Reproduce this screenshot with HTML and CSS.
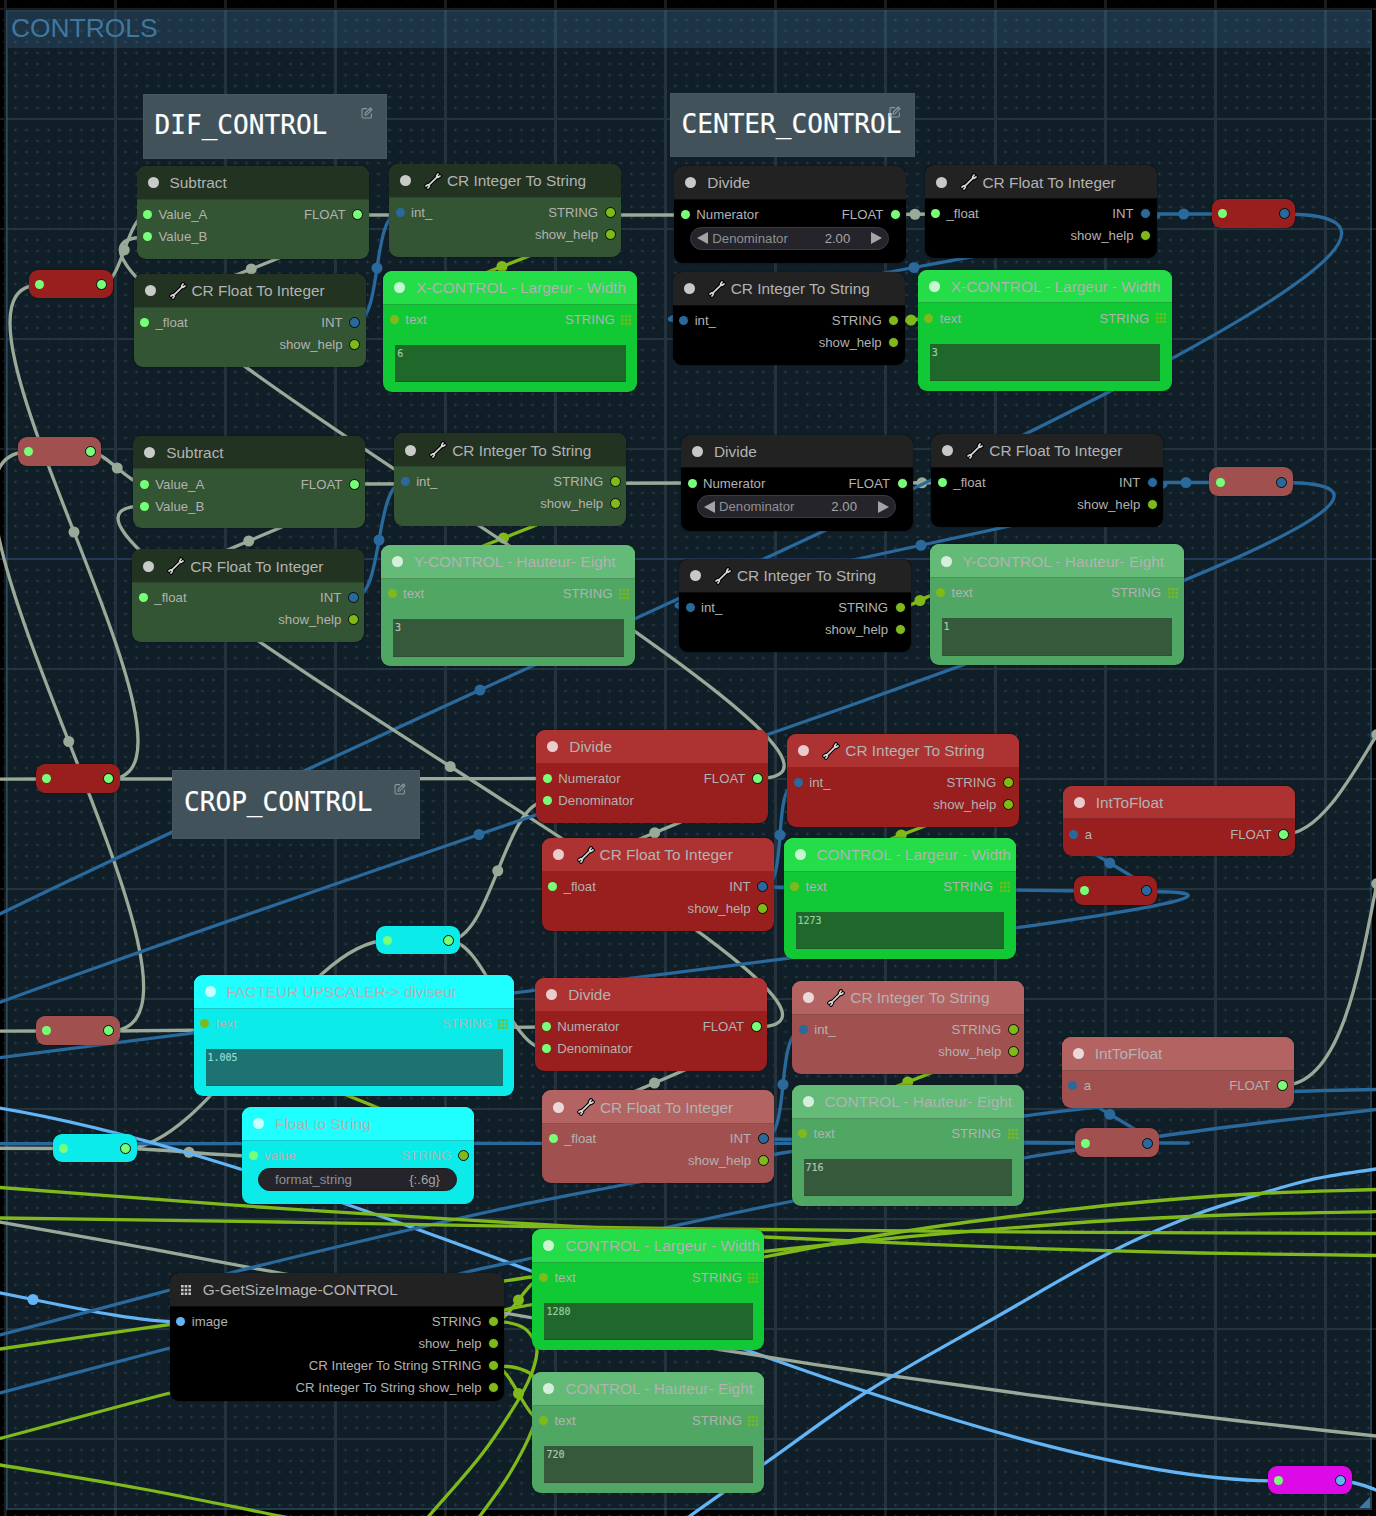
FILE: index.html
```html
<!DOCTYPE html>
<html lang="en">
<head>
<meta charset="utf-8">
<title>Controls graph</title>
<link rel="stylesheet" href="styles.css">
</head>
<body>
<svg class="defs" aria-hidden="true">
  <symbol id="wrench" viewBox="0 0 18 18">
    <path class="wrench-edge" d="M4.8 13.2 13.2 4.8M14 1.900 12.600 3.900 14 5.400 16 4M2 14 4 12.600 5.400 14 4 16"/>
    <path class="wrench-fill" d="M4.8 13.2 13.2 4.8M14 1.900 12.600 3.900 14 5.400 16 4M2 14 4 12.600 5.400 14 4 16"/>
  </symbol>
  <symbol id="grid9" viewBox="0 0 10 10">
    <path d="M0 0h2.6v2.6H0zM3.7 0h2.6v2.6H3.7zM7.4 0H10v2.6H7.4zM0 3.7h2.6v2.6H0zM3.7 3.7h2.6v2.6H3.7zM7.4 3.7H10v2.6H7.4zM0 7.4h2.6V10H0zM3.7 7.4h2.6V10H3.7zM7.4 7.4H10V10H7.4z"/>
  </symbol>
  <symbol id="edit" viewBox="0 0 12 12">
    <path d="M6 1.6H2.2Q1 1.6 1 2.8v7Q1 11 2.2 11h7q1.2 0 1.2-1.2V6.5M4 8.1 4.4 6 9.3 1 11 2.6 6 7.7zM8.2 2.2l1.6 1.6"/>
  </symbol>
</svg>
<main class="canvas">
  <svg class="layer" width="1376" height="1516">
    <defs>
      <pattern id="tickcell" x="7" y="6.5" width="11" height="11" patternUnits="userSpaceOnUse">
        <path class="tick" d="M2.500 5h4v1h-4zM4 4h1v3H4z"/>
      </pattern>
      <pattern id="tile" x="4" y="8" width="110" height="110" patternUnits="userSpaceOnUse">
        <rect width="110" height="110" fill="url(#tickcell)"/>
        <rect class="line" width="3" height="110"/>
        <rect class="line" width="110" height="2"/>
      </pattern>
    </defs>
    <rect width="1376" height="1516" fill="url(#tile)"/>
    <rect class="seam" y="558" width="1376" height="2"/>
  </svg>

  <section class="group"><h1>CONTROLS</h1><svg class="grip" viewBox="0 0 11 11"><path d="M11 0v11H0z"/></svg></section>

  <svg class="layer links" id="links" width="1376" height="1516"></svg>

  <div class="note note-dif"><h2>DIF_CONTROL</h2><svg class="edit"><use href="#edit"/></svg></div>
  <div class="note note-center"><h2>CENTER_CONTROL</h2><svg class="edit"><use href="#edit"/></svg></div>
  <div class="note note-crop"><h2>CROP_CONTROL</h2><svg class="edit"><use href="#edit"/></svg></div>

  <!-- difference -->
  <article class="node forest sub-x">
    <header><i></i><h3>Subtract</h3></header>
    <div class="slots"><ul><li class="float">Value_A</li><li class="float">Value_B</li></ul><ul class="out"><li class="float">FLOAT</li></ul></div>
  </article>
  <article class="node forest dif-int-x">
    <header><i></i><svg class="wrench"><use href="#wrench"/></svg><h3>CR Float To Integer</h3></header>
    <div class="slots"><ul><li class="float">_float</li></ul><ul class="out"><li class="int">INT</li><li class="string">show_help</li></ul></div>
  </article>
  <article class="node forest dif-str-x">
    <header><i></i><svg class="wrench"><use href="#wrench"/></svg><h3>CR Integer To String</h3></header>
    <div class="slots"><ul><li class="int">int_</li></ul><ul class="out"><li class="string">STRING</li><li class="string">show_help</li></ul></div>
  </article>
  <article class="node lime show wide dif-show-x">
    <header><i></i><h3>X-CONTROL - Largeur - Width</h3></header>
    <div class="slots"><ul><li class="string">text</li></ul><ul class="out"><li class="list">STRING<svg><use href="#grid9"/></svg></li></ul></div>
    <output>6</output>
  </article>
  <article class="node forest sub-y">
    <header><i></i><h3>Subtract</h3></header>
    <div class="slots"><ul><li class="float">Value_A</li><li class="float">Value_B</li></ul><ul class="out"><li class="float">FLOAT</li></ul></div>
  </article>
  <article class="node forest dif-int-y">
    <header><i></i><svg class="wrench"><use href="#wrench"/></svg><h3>CR Float To Integer</h3></header>
    <div class="slots"><ul><li class="float">_float</li></ul><ul class="out"><li class="int">INT</li><li class="string">show_help</li></ul></div>
  </article>
  <article class="node forest dif-str-y">
    <header><i></i><svg class="wrench"><use href="#wrench"/></svg><h3>CR Integer To String</h3></header>
    <div class="slots"><ul><li class="int">int_</li></ul><ul class="out"><li class="string">STRING</li><li class="string">show_help</li></ul></div>
  </article>
  <article class="node sage show wide dif-show-y">
    <header><i></i><h3>Y-CONTROL - Hauteur- Eight</h3></header>
    <div class="slots"><ul><li class="string">text</li></ul><ul class="out"><li class="list">STRING<svg><use href="#grid9"/></svg></li></ul></div>
    <output>3</output>
  </article>

  <!-- center -->
  <article class="node black tall div-x">
    <header><i></i><h3>Divide</h3></header>
    <div class="slots"><ul><li class="float">Numerator</li></ul><ul class="out"><li class="float">FLOAT</li></ul></div>
    <div class="widget number"><b class="prev"></b><span>Denominator</span><span class="value">2.00</span><b class="next"></b></div>
  </article>
  <article class="node black cen-int-x">
    <header><i></i><svg class="wrench"><use href="#wrench"/></svg><h3>CR Float To Integer</h3></header>
    <div class="slots"><ul><li class="float">_float</li></ul><ul class="out"><li class="int">INT</li><li class="string">show_help</li></ul></div>
  </article>
  <article class="node black cen-str-x">
    <header><i></i><svg class="wrench"><use href="#wrench"/></svg><h3>CR Integer To String</h3></header>
    <div class="slots"><ul><li class="int">int_</li></ul><ul class="out"><li class="string">STRING</li><li class="string">show_help</li></ul></div>
  </article>
  <article class="node lime show wide cen-show-x">
    <header><i></i><h3>X-CONTROL - Largeur - Width</h3></header>
    <div class="slots"><ul><li class="string">text</li></ul><ul class="out"><li class="list">STRING<svg><use href="#grid9"/></svg></li></ul></div>
    <output>3</output>
  </article>
  <article class="node black tall div-y">
    <header><i></i><h3>Divide</h3></header>
    <div class="slots"><ul><li class="float">Numerator</li></ul><ul class="out"><li class="float">FLOAT</li></ul></div>
    <div class="widget number"><b class="prev"></b><span>Denominator</span><span class="value">2.00</span><b class="next"></b></div>
  </article>
  <article class="node black cen-int-y">
    <header><i></i><svg class="wrench"><use href="#wrench"/></svg><h3>CR Float To Integer</h3></header>
    <div class="slots"><ul><li class="float">_float</li></ul><ul class="out"><li class="int">INT</li><li class="string">show_help</li></ul></div>
  </article>
  <article class="node black cen-str-y">
    <header><i></i><svg class="wrench"><use href="#wrench"/></svg><h3>CR Integer To String</h3></header>
    <div class="slots"><ul><li class="int">int_</li></ul><ul class="out"><li class="string">STRING</li><li class="string">show_help</li></ul></div>
  </article>
  <article class="node sage show wide cen-show-y">
    <header><i></i><h3>Y-CONTROL - Hauteur- Eight</h3></header>
    <div class="slots"><ul><li class="string">text</li></ul><ul class="out"><li class="list">STRING<svg><use href="#grid9"/></svg></li></ul></div>
    <output>1</output>
  </article>

  <!-- crop -->
  <article class="node red crop-div-w">
    <header><i></i><h3>Divide</h3></header>
    <div class="slots"><ul><li class="float">Numerator</li><li class="float">Denominator</li></ul><ul class="out"><li class="float">FLOAT</li></ul></div>
  </article>
  <article class="node red crop-int-w">
    <header><i></i><svg class="wrench"><use href="#wrench"/></svg><h3>CR Float To Integer</h3></header>
    <div class="slots"><ul><li class="float">_float</li></ul><ul class="out"><li class="int">INT</li><li class="string">show_help</li></ul></div>
  </article>
  <article class="node red crop-str-w">
    <header><i></i><svg class="wrench"><use href="#wrench"/></svg><h3>CR Integer To String</h3></header>
    <div class="slots"><ul><li class="int">int_</li></ul><ul class="out"><li class="string">STRING</li><li class="string">show_help</li></ul></div>
  </article>
  <article class="node lime show crop-show-w">
    <header><i></i><h3>CONTROL - Largeur - Width</h3></header>
    <div class="slots"><ul><li class="string">text</li></ul><ul class="out"><li class="list">STRING<svg><use href="#grid9"/></svg></li></ul></div>
    <output>1273</output>
  </article>
  <article class="node red short to-float-w">
    <header><i></i><h3>IntToFloat</h3></header>
    <div class="slots"><ul><li class="int">a</li></ul><ul class="out"><li class="float">FLOAT</li></ul></div>
  </article>
  <article class="node red crop-div-h">
    <header><i></i><h3>Divide</h3></header>
    <div class="slots"><ul><li class="float">Numerator</li><li class="float">Denominator</li></ul><ul class="out"><li class="float">FLOAT</li></ul></div>
  </article>
  <article class="node rose crop-int-h">
    <header><i></i><svg class="wrench"><use href="#wrench"/></svg><h3>CR Float To Integer</h3></header>
    <div class="slots"><ul><li class="float">_float</li></ul><ul class="out"><li class="int">INT</li><li class="string">show_help</li></ul></div>
  </article>
  <article class="node rose crop-str-h">
    <header><i></i><svg class="wrench"><use href="#wrench"/></svg><h3>CR Integer To String</h3></header>
    <div class="slots"><ul><li class="int">int_</li></ul><ul class="out"><li class="string">STRING</li><li class="string">show_help</li></ul></div>
  </article>
  <article class="node sage show crop-show-h">
    <header><i></i><h3>CONTROL - Hauteur- Eight</h3></header>
    <div class="slots"><ul><li class="string">text</li></ul><ul class="out"><li class="list">STRING<svg><use href="#grid9"/></svg></li></ul></div>
    <output>716</output>
  </article>
  <article class="node rose short to-float-h">
    <header><i></i><h3>IntToFloat</h3></header>
    <div class="slots"><ul><li class="int">a</li></ul><ul class="out"><li class="float">FLOAT</li></ul></div>
  </article>
  <article class="node cyan show factor">
    <header><i></i><h3>FACTEUR UPSCALER-&gt; diviseur</h3></header>
    <div class="slots"><ul><li class="string">text</li></ul><ul class="out"><li class="list">STRING<svg><use href="#grid9"/></svg></li></ul></div>
    <output>1.005</output>
  </article>
  <article class="node cyan tall float-str">
    <header><i></i><h3>Float to String</h3></header>
    <div class="slots"><ul><li class="float">value</li></ul><ul class="out"><li class="string">STRING</li></ul></div>
    <div class="widget"><span>format_string</span><span class="value">{:.6g}</span></div>
  </article>

  <!-- source image size -->
  <article class="node black get-size">
    <header><svg class="grid-mark"><use href="#grid9"/></svg><h3>G-GetSizeImage-CONTROL</h3></header>
    <div class="slots"><ul><li class="image">image</li></ul><ul class="out"><li class="string">STRING</li><li class="string">show_help</li><li class="string">CR Integer To String STRING</li><li class="string">CR Integer To String show_help</li></ul></div>
  </article>
  <article class="node lime show src-show-w">
    <header><i></i><h3>CONTROL - Largeur - Width</h3></header>
    <div class="slots"><ul><li class="string">text</li></ul><ul class="out"><li class="list">STRING<svg><use href="#grid9"/></svg></li></ul></div>
    <output>1280</output>
  </article>
  <article class="node sage show src-show-h">
    <header><i></i><h3>CONTROL - Hauteur- Eight</h3></header>
    <div class="slots"><ul><li class="string">text</li></ul><ul class="out"><li class="list">STRING<svg><use href="#grid9"/></svg></li></ul></div>
    <output>720</output>
  </article>

  <div class="reroute red rr-a"><i class="float"></i><i class="float end"></i></div>
  <div class="reroute rose rr-b"><i class="float"></i><i class="float end"></i></div>
  <div class="reroute red rr-c"><i class="float"></i><i class="float end"></i></div>
  <div class="reroute rose rr-d"><i class="float"></i><i class="float end"></i></div>
  <div class="reroute cyan rr-e"><i class="float"></i><i class="float end"></i></div>
  <div class="reroute cyan rr-f"><i class="float"></i><i class="float end"></i></div>
  <div class="reroute red rr-g"><i class="float"></i><i class="int end"></i></div>
  <div class="reroute rose rr-h"><i class="float"></i><i class="int end"></i></div>
  <div class="reroute red rr-i"><i class="float"></i><i class="int end"></i></div>
  <div class="reroute rose rr-j"><i class="float"></i><i class="int end"></i></div>
  <div class="reroute magenta rr-k"><i class="float"></i><i class="image end"></i></div>
</main>
<script src="links.js"></script>
</body>
</html>
```
FILE: styles.css
```css
:root {
  --float: #77ff77;
  --int: #29699c;
  --string: #7fba1a;
  --image: #64b5f6;
}

*, *::before { box-sizing: border-box; }

body {
  margin: 0;
  background: #000;
  font-family: "Liberation Sans", Arial, sans-serif;
  color: #b2b2b2;
}

h1, h2, h3, ul { margin: 0; padding: 0; font-weight: normal; list-style: none; }

.defs { position: absolute; width: 0; height: 0; }
.canvas { position: relative; width: 1376px; height: 1516px; overflow: hidden; }
.layer { position: absolute; left: 0; top: 0; }
.line { fill: #1b1c1e; }
.tick { fill: #202226; }
.seam { fill: #1c2c58; opacity: .6; }

.wrench-edge, .wrench-fill { fill: none; stroke-linecap: round; stroke-linejoin: round; }
.wrench-edge { stroke: #000; stroke-width: 3.8; }
.wrench-fill { stroke: #d8d8d8; stroke-width: 1.7; }

/* group frame */
.group {
  position: absolute; left: 6px; top: 10px; width: 1366px; height: 1500px;
  border: 2px solid rgba(63, 120, 158, .5);
  background: rgba(63, 120, 158, .25);
  background-clip: padding-box;
}
.group h1 {
  height: 36px; padding-left: 3px;
  background: rgba(63, 120, 158, .25);
  color: #3f789e; font-size: 26.4px; line-height: 32px;
}
.grip { position: absolute; right: 0; bottom: 0; width: 11px; height: 11px; fill: #3f789e; }

/* links */
.links path { fill: none; stroke-width: 3.3; }
.links path.float { stroke: #9aaa99; }
.links path.int { stroke: var(--int); }
.links path.string { stroke: var(--string); }
.links path.image { stroke: var(--image); }
.links circle.float { fill: #9aaa99; }
.links circle.int { fill: var(--int); }
.links circle.string { fill: var(--string); }
.links circle.image { fill: var(--image); }

/* labels */
.note {
  position: absolute; display: flex; align-items: center;
  padding: 0 0 3px 11px; border: 1px solid #46575f; background: #42525a;
}
.note h2 { color: #fff; font: 26.1px "DejaVu Sans Mono", monospace; white-space: nowrap; -webkit-text-stroke: .2px #fff; }
.edit {
  position: absolute; right: 13px; top: 12px; width: 12px; height: 12px;
  fill: none; stroke: #8b979d; stroke-width: 1.1; stroke-linejoin: round;
}
.note-dif { left: 142.5px; top: 94px; width: 244.5px; height: 65px; }
.note-center { left: 669.5px; top: 93px; width: 245.5px; height: 64px; }
.note-crop { left: 172px; top: 770px; width: 248px; height: 69px; padding-bottom: 6px; }

/* nodes */
.node {
  position: absolute; width: 232px; height: 92.5px; overflow: hidden;
  display: flex; flex-direction: column;
  border-radius: 9px; background: var(--body);
  box-shadow: 0 0 2px rgba(0, 0, 0, .5);
}
.node.tall { height: 96.7px; }
.node.short { height: 70.5px; }
.node.show { height: 121px; }
.node.wide { width: 254px; }
.node header {
  flex: none; display: flex; align-items: center; height: 33.5px; padding: 1px 0 0 11px;
  background: var(--head); border-bottom: 1px solid var(--rule, rgba(0, 0, 0, .22));
  white-space: nowrap;
}
.node header i { flex: none; width: 11px; height: 11px; border-radius: 50%; background: var(--dot); margin-right: 11px; }
.node h3 { padding-top: 1px; font-size: 15.4px; line-height: 20px; }
.wrench { flex: none; width: 18px; height: 18px; margin: 0 5px 0 2px; }
.grid-mark { width: 10px; height: 10px; margin-right: 12px; fill: #c8c8c8; }

.slots { display: flex; justify-content: space-between; padding: 4.2px 5.5px 0 6.5px; }
.slots li { display: flex; align-items: center; gap: 6.5px; height: 22px; font-size: 13.2px; white-space: nowrap; }
.slots li::before { content: ""; width: 9px; height: 9px; border-radius: 50%; background: var(--c); }
.out li { justify-content: flex-end; }
.out li::before { order: 2; width: 11px; height: 11px; border: 1.5px solid #0a0a0a; }
.out li.list::before { display: none; }
.list svg { width: 10px; height: 10px; margin-right: .5px; fill: var(--string); opacity: .85; }
.float { --c: var(--float); }
.int { --c: var(--int); }
.string { --c: var(--string); }
.image { --c: var(--image); }

.node output {
  height: 37.5px; margin: 14.3px 11.5px 0 12px; padding: 3px 2px;
  background: var(--area); border-bottom: 1px solid rgba(0, 0, 0, .12);
  color: var(--value); font: 10px/12px "DejaVu Sans Mono", monospace;
  -webkit-text-stroke: .2px var(--value);
}

.widget {
  display: flex; align-items: center; justify-content: space-between;
  height: 23px; margin: 1px 17px 0 16px; padding: 0 16px;
  border: 1px solid #3c3c40; border-radius: 12px; background: #25242b;
  color: #8f8f92; font-size: 13.2px;
}
.widget .value { color: #a4a4a6; }
.widget.number { padding: 0 6px; }
.number .value { margin-left: auto; margin-right: 21px; }
.widget b { border: 6px solid transparent; }
.widget .prev { border-width: 6px 11px 6px 0; border-right-color: #a4a4a6; margin-right: 4px; }
.widget .next { border-width: 6px 0 6px 11px; border-left-color: #a4a4a6; }
.cyan .widget { border-color: #1a1a1c; }

/* node palettes */
.forest { --head: #223322; --body: #335533; --dot: #c8ccc8; --rule: #2c482c; }
.black { --head: #222; --body: #000; --dot: #c8c8c8; --rule: #0c0c0c; }
.black .out li::before { border-color: #000; }
.lime { --head: #24dd49; --body: #10c935; --dot: #c8f6d1; --area: #1f672b; --value: #93d19d; }
.sage { --head: #63bb77; --body: #4fa763; --dot: #d8eedd; --area: #36593c; --value: #a9c8ae; }
.red { --head: #ad3232; --body: #991e1e; --dot: #eacccc; }
.rose { --head: #b46363; --body: #a15050; --dot: #ecd8d8; }
.cyan { --head: #1fffff; --body: #0becea; --dot: #c7ffff; --area: #1c7371; --value: #90dcda; }
.magenta { --body: #dc0ae6; }

/* reroute pills */
.reroute {
  position: absolute; width: 83.5px; height: 28.7px; padding: 0 5.5px 0 6.3px;
  display: flex; align-items: center; justify-content: space-between;
  border-radius: 9px; background: var(--body); box-shadow: 0 0 2px rgba(0, 0, 0, .5);
}
.reroute i { width: 9px; height: 9px; border-radius: 50%; background: var(--c); margin-top: 1px; }
.reroute .end { width: 11px; height: 11px; border: 1.5px solid #0a0a0a; }

/* positions on the canvas */
.sub-x { left: 136.5px; top: 166px; }
.dif-int-x { left: 133.5px; top: 274px; }
.dif-str-x { left: 389px; top: 164px; }
.dif-show-x { left: 383.3px; top: 271px; }
.sub-y { left: 133.3px; top: 435.5px; }
.dif-int-y { left: 132.3px; top: 549.3px; }
.dif-str-y { left: 394.2px; top: 433.3px; }
.dif-show-y { left: 381px; top: 545.2px; }
.div-x { left: 674.3px; top: 166px; }
.cen-int-x { left: 924.5px; top: 165.3px; }
.cen-str-x { left: 672.7px; top: 272px; }
.cen-show-x { left: 917.8px; top: 269.7px; }
.div-y { left: 681px; top: 434.5px; }
.cen-int-y { left: 931.3px; top: 434px; }
.cen-str-y { left: 679px; top: 559px; }
.cen-show-y { left: 929.5px; top: 544.3px; }
.crop-div-w { left: 536.3px; top: 730px; }
.crop-int-w { left: 541.6px; top: 838px; }
.crop-str-w { left: 787.3px; top: 734px; }
.crop-show-w { left: 783.5px; top: 838px; }
.to-float-w { left: 1062.7px; top: 785.8px; }
.crop-div-h { left: 535.2px; top: 978.2px; }
.crop-int-h { left: 542px; top: 1090.3px; }
.crop-str-h { left: 792.3px; top: 981px; }
.crop-show-h { left: 791.5px; top: 1085px; }
.to-float-h { left: 1061.7px; top: 1037px; }
.factor { left: 193.5px; top: 975px; width: 320.5px; }
.float-str { left: 242px; top: 1107px; }
.get-size { left: 169.8px; top: 1273px; width: 334.7px; height: 127.5px; }
.src-show-w { left: 532.4px; top: 1229px; }
.src-show-h { left: 532.4px; top: 1372px; }
.rr-a { left: 29px; top: 269.5px; }
.rr-b { left: 17.8px; top: 437px; }
.rr-c { left: 36.2px; top: 764px; }
.rr-d { left: 36.2px; top: 1016px; }
.rr-e { left: 376.3px; top: 925.5px; }
.rr-f { left: 53px; top: 1133.5px; }
.rr-g { left: 1211.7px; top: 199px; }
.rr-h { left: 1209.4px; top: 467.2px; }
.rr-i { left: 1073.6px; top: 876px; }
.rr-j { left: 1075px; top: 1128.3px; }
.rr-k { left: 1268.2px; top: 1465.5px; }
```
FILE: links.js
```js
// Slot-to-slot links: [type, x1, y1, x2, y2]; each gets a dot at its middle.
const links = [
  ["string", 610, 213, 394, 320],
  ["string", 615, 482, 392, 594],
  ["string", 893, 321, 929, 319],
  ["string", 900, 608, 940, 593],
  ["string", 1008, 783, 794.5, 887],
  ["string", 1013, 1030, 802.5, 1134],
  ["string", 463, 1156, 204.5, 1024],
  ["string", 493.5, 1322, 543.5, 1278],
  ["string", 493.5, 1366, 543.5, 1421],
  ["float", 108.5, 779, 39.5, 285],
  ["float", 109, 1031, 28.5, 452],
  ["float", 101, 285, 147.5, 215],
  ["float", 757, 778.5, 147.5, 237],
  ["float", 90, 452, 144.5, 484],
  ["float", 358, 215, 685, 215],
  ["float", 354, 484, 692, 483],
  ["float", 358, 215, 144.5, 323],
  ["float", 354, 484, 143.5, 598],
  ["float", 895, 214.5, 935, 214],
  ["float", 902, 483, 942, 482.5],
  ["float", 757, 778.5, 552.5, 887],
  ["float", 756, 1027, 553, 1139],
  ["float", -300, 780, 47, 779],
  ["float", 108.5, 779, 547, 778.5],
  ["float", -300, 1032, 47, 1031],
  ["float", 109, 1031, 546, 1027],
  ["float", 448.5, 940.5, 547, 801],
  ["float", 448.5, 940.5, 546, 1049],
  ["float", 125, 1148.5, 387.5, 940.5],
  ["int", 1147, 1143, -324, 1144],
  ["float", 125, 1148.5, 253, 1156],
  ["float", -300, 1147, 64, 1148.5],
  ["float", 1283.5, 834.5, 1470, 635],
  ["float", 1282.5, 1085.5, 1471, 682],
  ["int", 354, 323, 400, 213],
  ["int", 353, 598, 405, 482],
  ["int", 1145, 214, 1222.5, 214],
  ["int", 1145, 214, 683, 321],
  ["int", 1152, 482.5, 1220, 482.5],
  ["int", 1152, 482.5, 690, 608],
  ["int", 762.5, 887, 797.5, 783],
  ["int", 762.5, 887, 1084.5, 891],
  ["int", 763, 1139, 803, 1030],
  ["int", 763, 1139, 1086, 1143],
  ["int", 1146, 891.5, 1073.5, 834.5],
  ["int", 1147, 1143, 1072.5, 1085.5],
  ["image", -119, 1097, 1279, 1481],
  ["image", -114, 1277, 180, 1322],
  ["image", 1340.5, 1481, 1480, 1530],
  ["int", 1284, 214, -324, 1166],
  ["float", 756, 1027, 144.5, 506],
  ["int", 1282, 482.5, -324, 1186.5],
  ["int", 1146, 891.5, -324, 1120]
];

// Links whose far ends lie outside the view, as points along the wire.
const wires = [
  ["float", [[-20, 1218], [0, 1222], [140, 1247], [280, 1273], [504, 1313], [723, 1350], [900, 1377], [1092, 1403], [1240, 1421], [1376, 1436], [1400, 1438]]],
  ["int", [[-20, 1340], [0, 1335], [170, 1290], [232, 1272.5], [400, 1232], [520, 1205], [633, 1183], [782, 1153], [1024, 1116], [1097, 1107], [1180, 1098], [1294, 1091.5], [1376, 1089.5], [1400, 1089]]],
  ["int", [[-20, 1398], [0, 1393], [170, 1348], [467, 1272], [532, 1258], [660, 1229], [791, 1201.5], [1024, 1158], [1075, 1150], [1158, 1136.5], [1260, 1123], [1376, 1109.5], [1400, 1107]]],
  ["image", [[670, 1532], [690, 1516], [764, 1464], [868, 1391], [998, 1316], [1114, 1250.5], [1192, 1216], [1250, 1197], [1310, 1180], [1376, 1169], [1400, 1166]]],
  ["string", [[-20, 1186], [0, 1187.5], [260, 1207], [532, 1224], [764, 1237], [1036, 1248.5], [1200, 1253], [1376, 1255.5], [1400, 1256]]],
  ["string", [[-20, 1218], [0, 1218], [280, 1222], [532, 1226.5], [764, 1229.5], [1036, 1232], [1376, 1233.5], [1400, 1233.5]]],
  ["string", [[-20, 1352], [0, 1349], [170, 1324.5], [504, 1281], [532, 1277], [764, 1251.5], [900, 1237.5], [1036, 1226], [1120, 1220], [1240, 1214.5], [1376, 1211.7], [1400, 1211.5]]],
  ["string", [[-20, 1443], [0, 1438.5], [170, 1393], [504, 1310], [532, 1304.5], [764, 1257], [900, 1232], [1000, 1218], [1127, 1203.5], [1250, 1194], [1376, 1189.5], [1400, 1189]]],
  ["string", [[-20, 1462], [0, 1465], [140, 1488.5], [280, 1516], [300, 1520]]],
  ["string", [[493.5, 1322], [508, 1322.5], [524, 1328], [534, 1340], [537, 1352], [531, 1375], [516.5, 1403], [482, 1454], [429, 1516], [420, 1526]]],
  ["string", [[493.5, 1366], [508, 1366.5], [522, 1369.5], [533, 1376], [540, 1395], [532, 1430], [510, 1473], [480, 1516], [470, 1528]]]
];

const svg = document.getElementById("links");

function add(tag, type, attrs) {
  const el = document.createElementNS("http://www.w3.org/2000/svg", tag);
  el.setAttribute("class", type);
  for (const key in attrs) el.setAttribute(key, attrs[key]);
  svg.appendChild(el);
}

function smooth(p) {
  let d = `M${p[0]}`;
  for (let i = 0; i < p.length - 1; i++) {
    const a = p[i - 1] || p[i], b = p[i], c = p[i + 1], e = p[i + 2] || c;
    const k = Math.hypot(c[0] - b[0], c[1] - b[1]) / 3;
    const t1 = Math.hypot(c[0] - a[0], c[1] - a[1]) || 1;
    const t2 = Math.hypot(e[0] - b[0], e[1] - b[1]) || 1;
    d += `C${b[0] + (c[0] - a[0]) / t1 * k},${b[1] + (c[1] - a[1]) / t1 * k} ` +
         `${c[0] - (e[0] - b[0]) / t2 * k},${c[1] - (e[1] - b[1]) / t2 * k} ${c}`;
  }
  return d;
}

function spline([type, x1, y1, x2, y2]) {
  const k = Math.hypot(x2 - x1, y2 - y1) / 4;
  add("path", type, { d: `M${x1},${y1}C${x1 + k},${y1} ${x2 - k},${y2} ${x2},${y2}` });
  add("circle", type, { cx: (x1 + x2) / 2, cy: (y1 + y2) / 2, r: 5.5 });
}

links.forEach(spline);
["float", "image", "int", "string"].forEach(kind =>
  wires.filter(w => w[0] === kind).forEach(([type, p]) => add("path", type, { d: smooth(p) })));
```
